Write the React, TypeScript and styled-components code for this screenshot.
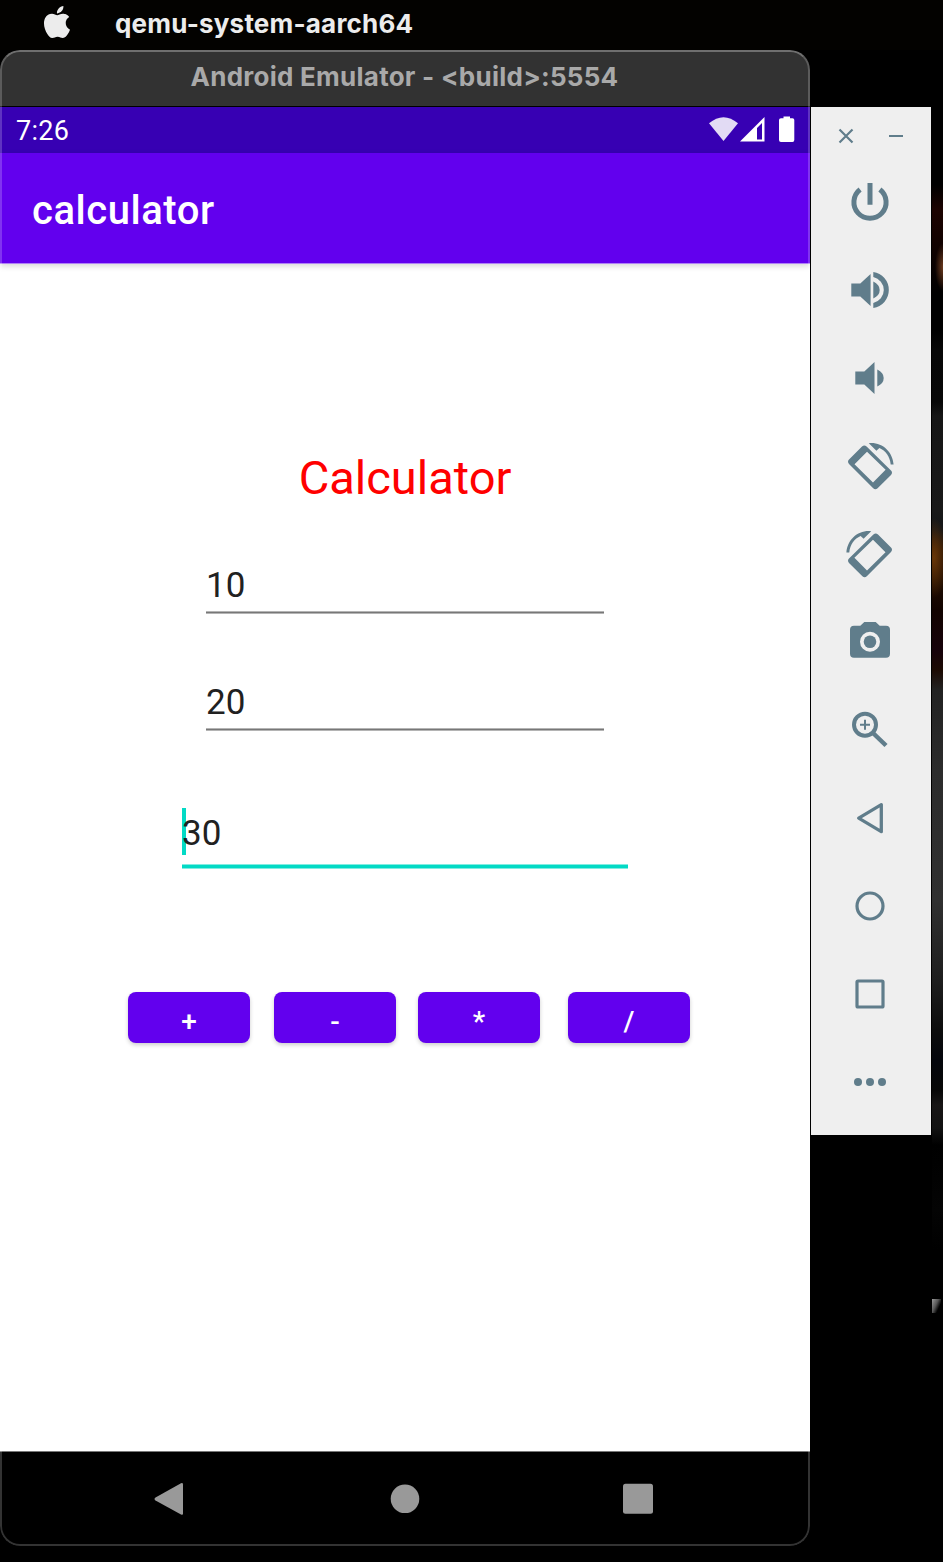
import React from 'react';
import styled, { createGlobalStyle } from 'styled-components';
import { SiApple } from 'react-icons/si';

const GlobalStyle = createGlobalStyle`
  * { box-sizing: border-box; }
  body { margin: 0; background: #000; font-family: Roboto, sans-serif; }
`;

const Desktop = styled.div`
  width: 943px;
  height: 1562px;
  overflow: hidden;
  background: #000;
`;

const MenuBar = styled.header`
  display: flex;
  align-items: center;
  height: 50px;
  padding: 0 0 6px 41px;
  gap: 42px;
  background: #030200;
  color: #ececec;
`;

const AppName = styled.span`
  font: 700 26px/32px Inter, sans-serif;
  letter-spacing: 0.2px;
  padding-top: 4px;
`;

const Workspace = styled.main`
  display: flex;
  align-items: flex-start;
`;

const EmulatorWindow = styled.section`
  position: relative;
  display: flex;
  flex-direction: column;
  width: 810px;
  height: 1496px;
  border-radius: 20px;
  overflow: hidden;
`;

const WindowOutline = styled.div`
  position: absolute;
  inset: 0;
  z-index: 2;
  border: 2px solid rgba(255, 255, 255, 0.2);
  border-top-color: rgba(255, 255, 255, 0.3);
  border-radius: 20px;
  pointer-events: none;
`;

const TitleBar = styled.div`
  height: 57px;
  padding: 11px 1px 0 0;
  background: #323232;
  border-bottom: 1px solid #000;
  color: #a9a9a9;
  text-align: center;
  font: 700 26px/32px Inter, sans-serif;
  letter-spacing: 0.25px;
`;

const StatusBar = styled.div`
  display: flex;
  align-items: center;
  justify-content: space-between;
  height: 46px;
  padding: 0 12px 0 16px;
  background: #3700b3;
  color: #fff;
  font-size: 27px;
`;

const Clock = styled.span`
  padding-top: 2px;
  letter-spacing: 0.25px;
`;

const AppBar = styled.div`
  display: flex;
  align-items: center;
  height: 111px;
  padding: 4px 0 0 32px;
  background: #6200ee;
  border-bottom: 1px solid #b080f6;
  color: #fff;
  font-size: 40px;
  font-weight: 500;
  letter-spacing: 0.55px;
  box-shadow: 0 2px 6px rgba(0, 0, 0, 0.16);
  z-index: 1;
`;

const Screen = styled.div`
  display: flex;
  flex-direction: column;
  align-items: center;
  flex: 1;
  padding-top: 186px;
  background: #fff;
`;

const Heading = styled.h1`
  margin: 0;
  color: #f00;
  font-size: 47px;
  font-weight: 400;
  line-height: 56px;
`;

const Field = styled.div<{ $active?: boolean; $gap: number }>`
  position: relative;
  width: ${(p) => (p.$active ? 446 : 398)}px;
  height: ${(p) => (p.$active ? 61 : 51)}px;
  margin-top: ${(p) => p.$gap}px;
  background: ${(p) =>
    p.$active
      ? 'linear-gradient(#81ece2 1px, #03dac5 1px, #03dac5 4px, #81ece2 4px) bottom / 100% 5px no-repeat'
      : 'linear-gradient(#b4b4b4 1px, #777 1px, #777 2px, #b4b4b4 2px) bottom / 100% 3px no-repeat'};
  color: #212121;
  font-size: 35px;
  line-height: ${(p) => (p.$active ? 51 : 46)}px;
`;

const Caret = styled.i`
  position: absolute;
  left: 0;
  top: 0;
  width: 4px;
  height: 47px;
  background: #03dac5;
`;

const FieldValue = styled.span`
  position: relative;
`;

const Keys = styled.div`
  display: flex;
  width: 562px;
  margin: 123px 0 0 8px;
`;

const Key = styled.button<{ $gap?: number }>`
  width: 122px;
  height: 51px;
  margin: 0 0 0 ${(p) => p.$gap ?? 0}px;
  padding: 9px 0 0;
  border: 0;
  border-radius: 8px;
  background: #6200ee;
  box-shadow: 0 2px 4px rgba(0, 0, 0, 0.2);
  color: #fff;
  font: 500 28px/40px Roboto, sans-serif;
`;

const NavBar = styled.div`
  display: grid;
  grid-template-columns: 30px 30px 30px;
  justify-content: center;
  column-gap: 204px;
  height: 95px;
  padding-top: 31px;
  border-top: 1px solid #777;
  background: #000;
  color: #999;
`;

const NavIcon = styled.svg<{ $nudge?: number }>`
  width: 30px;
  height: 32px;
  margin-left: ${(p) => p.$nudge ?? 0}px;
  fill: currentColor;
`;

const Toolbar = styled.aside`
  width: 120px;
  height: 1028px;
  margin: 57px 0 0 1px;
  background: #efefef;
  color: #607d8b;
`;

const WindowControls = styled.div`
  display: flex;
  height: 51px;
  padding: 21px 0 0 27px;
  gap: 34px;
`;

const ToolSlot = styled.div`
  display: flex;
  align-items: center;
  justify-content: center;
  height: 88px;
  padding-right: 2px;
`;

const Wallpaper = styled.div`
  width: 11px;
  height: 1512px;
  margin-left: 1px;
  background:
    radial-gradient(ellipse 8px 24px at 11px 217px, #6b3a1e, rgba(60, 25, 10, 0)),
    radial-gradient(ellipse 14px 40px at 2px 508px, #683607, rgba(80, 35, 5, 0)),
    linear-gradient(115deg, #9a9a9a 0, #555 6px, rgba(0, 0, 0, 0) 10px) 0 1249px / 9px 14px no-repeat,
    linear-gradient(
      180deg,
      #000 0, #000 135px, #1c0301 160px, #140200 185px, #000 245px, #000 280px,
      #070707 300px, #080808 352px, #161616 366px, #191919 460px, #141618 480px,
      #2a1404 500px, #200e02 530px, #120300 560px, #16020a 600px, #1c0a03 620px,
      #222 640px, #2c2c2c 720px, #303030 850px, #1e1e1e 930px, #0d0d0d 980px,
      #04060c 1010px, #070707 1040px, #171515 1055px, #121212 1078px, #000 1095px,
      #040404 1160px, #000 1200px, #000 100%
    );
`;

const Tool = ({ children }: { children: React.ReactNode }) => (
  <ToolSlot>
    <svg width="48" height="48" viewBox="-24 -24 48 48" fill="currentColor">{children}</svg>
  </ToolSlot>
);

const RotateShape = () => (
  <>
    <path
      fillRule="evenodd"
      d="M-8-19.4Q-5.7-21.6-3.4-19.4L21 4.6Q23 6.8 21 9L7.6 22.2Q5.4 24.4 3.2 22.2L-21-2Q-23-4.2-21-6.4ZM-3-14.3L-15.5-1.7L3 16.4L15.6 3.8Z"
    />
    <path d="M-1.2-22.8C12-24.2 22.6-14.5 23.6-1.5H20.7C20-9.6 15.6-15.2 9.4-18L6.4-15.2Z" />
  </>
);

const stroke = { fill: 'none', stroke: 'currentColor' };

export default function App() {
  return (
    <Desktop>
      <GlobalStyle />
      <MenuBar>
        <SiApple size={32} />
        <AppName>qemu-system-aarch64</AppName>
      </MenuBar>
      <Workspace>
        <EmulatorWindow>
          <TitleBar>Android Emulator - &lt;build&gt;:5554</TitleBar>
          <StatusBar>
            <Clock>7:26</Clock>
            <svg width="90" height="30" viewBox="0 0 90 30" fill="#fff">
              <path d="M1 8.3Q15.5-3.7 30 8.3L15.5 26Z" opacity="0.86" />
              <path fillRule="evenodd" d="M32 26.5L56.5 2V26.5ZM49 13V24.5H54V8Z" />
              <path d="M75.500 3.300V1.500H82V3.300H84.500Q86.300 3.300 86.300 5V25Q86.300 27 84.500 27H73Q71 27 71 25V5Q71 3.300 73 3.300Z" />
            </svg>
          </StatusBar>
          <AppBar>calculator</AppBar>
          <Screen>
            <Heading>Calculator</Heading>
            <Field $gap={57}>10</Field>
            <Field $gap={66}>20</Field>
            <Field $active $gap={77}>
              <Caret />
              <FieldValue>30</FieldValue>
            </Field>
            <Keys>
              <Key>+</Key>
              <Key $gap={24}>-</Key>
              <Key $gap={22}>*</Key>
              <Key $gap={28}>/</Key>
            </Keys>
          </Screen>
          <NavBar>
            <NavIcon viewBox="0 0 30 32" $nudge={-2}>
              <path d="M1.500 14.500L27 .2Q29 -.5 29 1.500V30.500Q29 32.500 27 31.500L1.500 17.500Q-.5 16 1.500 14.500Z" />
            </NavIcon>
            <NavIcon viewBox="0 0 30 32">
              <circle cx="15" cy="15.800" r="14.300" />
            </NavIcon>
            <NavIcon viewBox="0 0 30 32" $nudge={-1}>
              <rect y=".8" width="30" height="30" rx="2.500" />
            </NavIcon>
          </NavBar>
          <WindowOutline />
        </EmulatorWindow>
        <Toolbar>
          <WindowControls>
            <svg width="16" height="16" viewBox="-8 -8 16 16" {...stroke} strokeWidth="2.2">
              <path d="M-6.500-6.500L6.500 6.500M6.500-6.500L-6.500 6.500" />
            </svg>
            <svg width="16" height="16" viewBox="-8 -8 16 16" {...stroke} strokeWidth="2">
              <path d="M-7 0H7" />
            </svg>
          </WindowControls>
          <Tool>
            <path {...stroke} strokeWidth="5" d="M-9.900-12.500A16.100 16.100 0 1 0 9.900-12.500M0-19V2.700" />
          </Tool>
          <Tool>
            <path d="M-18.700-6.500H-9.700L.6-16V16L-9.700 6.500H-18.700ZM3.300-8.500Q9.700-5.500 9.700 0T3.300 8.500ZM3.300-18A18.200 18.200 0 0 1 3.300 18V13A13.300 13.300 0 0 0 3.300-13Z" />
          </Tool>
          <Tool>
            <path d="M-14.700-6.500H-5.700L4.500-16V16L-5.700 6.500H-14.700ZM7.300-8.500Q13.700-5.500 13.700 0T7.300 8.500Z" />
          </Tool>
          <Tool><RotateShape /></Tool>
          <Tool><g transform="scale(-1 1)"><RotateShape /></g></Tool>
          <Tool>
            <path
              fillRule="evenodd"
              d="M-9.700-16.300L-5.700-20H5.700L9.700-16.300H16Q20-16.300 20-12.300V11.700Q20 15.700 16 15.700H-16Q-20 15.700-20 11.700V-12.300Q-20-16.300-16-16.300ZM0-10.300A10 10 0 1 0 0 9.700A10 10 0 1 0 0-10.300Z"
            />
            <circle cy="-.3" r="6.300" />
          </Tool>
          <Tool>
            <g {...stroke}>
              <circle cx="-5" cy="-5.300" r="11" strokeWidth="4" />
              <path strokeWidth="2" d="M-10-5.300H0M-5-10.300V-.3" />
              <path strokeWidth="4.500" d="M3.500 3.500L16 15.500" />
            </g>
          </Tool>
          <Tool>
            <path {...stroke} strokeWidth="3.300" strokeLinejoin="round" d="M-11.300 .2L11.300-13.300V13.700Z" />
          </Tool>
          <Tool><circle {...stroke} strokeWidth="3.200" r="13" /></Tool>
          <Tool><rect {...stroke} strokeWidth="3.200" x="-13" y="-13" width="26" height="26" rx="1" /></Tool>
          <Tool>
            <circle cx="-12" r="4" /><circle r="4" /><circle cx="12" r="4" />
          </Tool>
        </Toolbar>
        <Wallpaper />
      </Workspace>
    </Desktop>
  );
}
